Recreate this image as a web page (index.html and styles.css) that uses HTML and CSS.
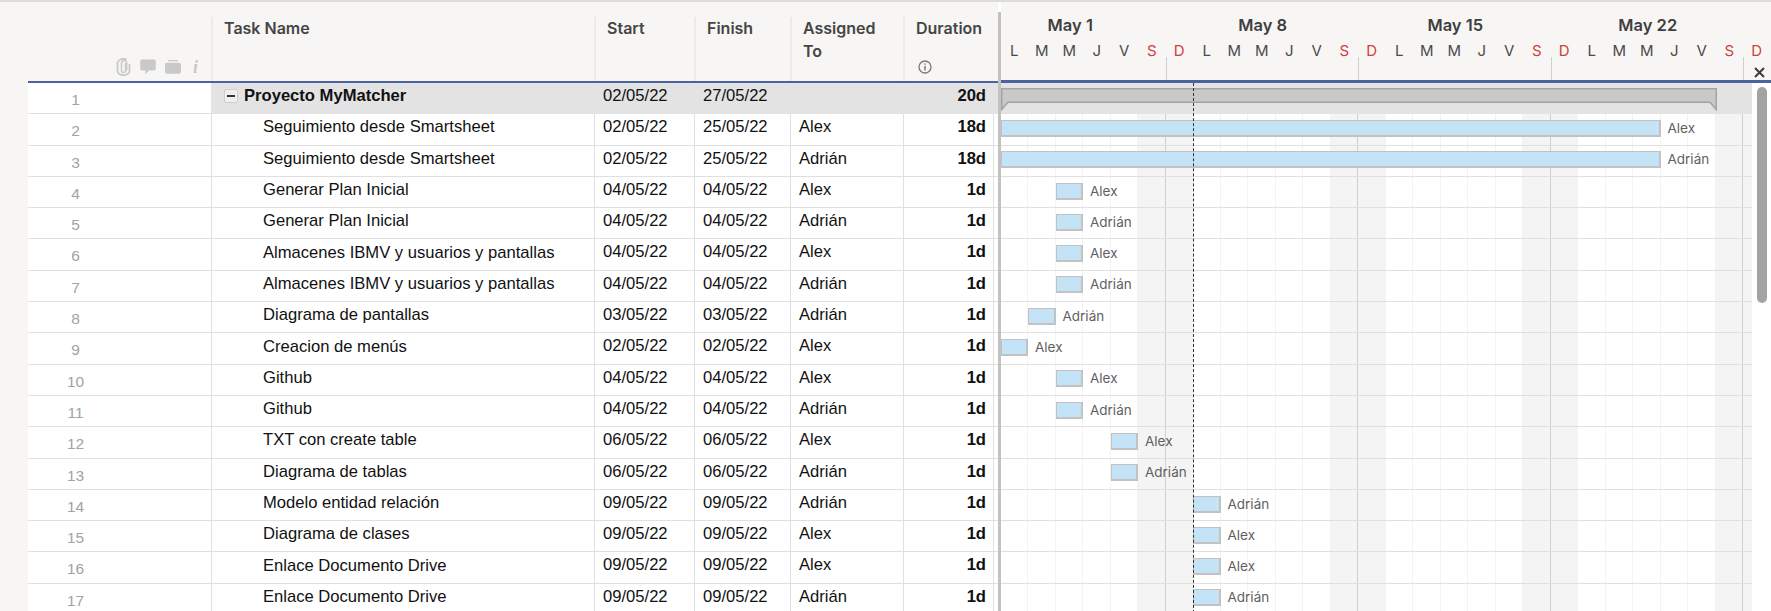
FILE: index.html
```html
<!DOCTYPE html>
<html lang="es">
<head>
<meta charset="utf-8">
<title>Proyecto MyMatcher</title>
<link rel="stylesheet" href="styles.css">
</head>
<body>
<div class="app">
  <div class="gutter"></div>
  <section class="sheet">
    <div class="head">
      <div class="hc hc-icons">
        <svg class="ico" width="15" height="18" viewBox="0 0 15 18"><path d="M9.500 5v7.500a2 2 0 0 1-4 0V5a2.600 2.600 0 0 1 5.200 0v7.500" fill="none" stroke="#c9c9c9" stroke-width="1.500"/><path d="M13.500 6v7a6 4.200 0 0 1-12 0V5.500a6 4.700 0 0 1 9-4" fill="none" stroke="#c9c9c9" stroke-width="1.800"/></svg>
        <svg class="ico" width="16" height="16" viewBox="0 0 16 16"><path d="M2 .5h12A1.800 1.800 0 0 1 15.800 2.300v7.400A1.800 1.800 0 0 1 14 11.500H9L5.500 15.500v-4H2A1.800 1.800 0 0 1 .2 9.700V2.300A1.800 1.800 0 0 1 2 .5z" fill="#c9c9c9"/></svg>
        <svg class="ico" width="16" height="14" viewBox="0 0 16 14"><path d="M3 0h10v1.300H3z" fill="#c9c9c9"/><rect x="0" y="2.700" width="16" height="11" rx="2" fill="#c9c9c9"/></svg>
        <span class="ico-i">i</span>
      </div>
      <div class="hc">Task Name</div>
      <div class="hc">Start</div>
      <div class="hc">Finish</div>
      <div class="hc hc-assigned">Assigned To</div>
      <div class="hc hc-dur">Duration
        <svg class="info" width="14" height="14" viewBox="0 0 14 14"><circle cx="7" cy="7" r="6" fill="none" stroke="#7a7a7a" stroke-width="1.300"/><path d="M7 3.500v1.200M7 6v4.500" stroke="#7a7a7a" stroke-width="1.500"/></svg>
      </div>
    </div>

    <div class="row summary"><div class="num">1</div><div class="c task"><span class="toggle"></span>Proyecto MyMatcher</div><div class="c">02/05/22</div><div class="c">27/05/22</div><div class="c"></div><div class="c dur">20d</div></div>
    <div class="row"><div class="num">2</div><div class="c task sub">Seguimiento desde Smartsheet</div><div class="c">02/05/22</div><div class="c">25/05/22</div><div class="c">Alex</div><div class="c dur">18d</div></div>
    <div class="row"><div class="num">3</div><div class="c task sub">Seguimiento desde Smartsheet</div><div class="c">02/05/22</div><div class="c">25/05/22</div><div class="c">Adrián</div><div class="c dur">18d</div></div>
    <div class="row"><div class="num">4</div><div class="c task sub">Generar Plan Inicial</div><div class="c">04/05/22</div><div class="c">04/05/22</div><div class="c">Alex</div><div class="c dur">1d</div></div>
    <div class="row"><div class="num">5</div><div class="c task sub">Generar Plan Inicial</div><div class="c">04/05/22</div><div class="c">04/05/22</div><div class="c">Adrián</div><div class="c dur">1d</div></div>
    <div class="row"><div class="num">6</div><div class="c task sub">Almacenes IBMV y usuarios y pantallas</div><div class="c">04/05/22</div><div class="c">04/05/22</div><div class="c">Alex</div><div class="c dur">1d</div></div>
    <div class="row"><div class="num">7</div><div class="c task sub">Almacenes IBMV y usuarios y pantallas</div><div class="c">04/05/22</div><div class="c">04/05/22</div><div class="c">Adrián</div><div class="c dur">1d</div></div>
    <div class="row"><div class="num">8</div><div class="c task sub">Diagrama de pantallas</div><div class="c">03/05/22</div><div class="c">03/05/22</div><div class="c">Adrián</div><div class="c dur">1d</div></div>
    <div class="row"><div class="num">9</div><div class="c task sub">Creacion de menús</div><div class="c">02/05/22</div><div class="c">02/05/22</div><div class="c">Alex</div><div class="c dur">1d</div></div>
    <div class="row"><div class="num">10</div><div class="c task sub">Github</div><div class="c">04/05/22</div><div class="c">04/05/22</div><div class="c">Alex</div><div class="c dur">1d</div></div>
    <div class="row"><div class="num">11</div><div class="c task sub">Github</div><div class="c">04/05/22</div><div class="c">04/05/22</div><div class="c">Adrián</div><div class="c dur">1d</div></div>
    <div class="row"><div class="num">12</div><div class="c task sub">TXT con create table</div><div class="c">06/05/22</div><div class="c">06/05/22</div><div class="c">Alex</div><div class="c dur">1d</div></div>
    <div class="row"><div class="num">13</div><div class="c task sub">Diagrama de tablas</div><div class="c">06/05/22</div><div class="c">06/05/22</div><div class="c">Adrián</div><div class="c dur">1d</div></div>
    <div class="row"><div class="num">14</div><div class="c task sub">Modelo entidad relación</div><div class="c">09/05/22</div><div class="c">09/05/22</div><div class="c">Adrián</div><div class="c dur">1d</div></div>
    <div class="row"><div class="num">15</div><div class="c task sub">Diagrama de clases</div><div class="c">09/05/22</div><div class="c">09/05/22</div><div class="c">Alex</div><div class="c dur">1d</div></div>
    <div class="row"><div class="num">16</div><div class="c task sub">Enlace Documento Drive</div><div class="c">09/05/22</div><div class="c">09/05/22</div><div class="c">Alex</div><div class="c dur">1d</div></div>
    <div class="row"><div class="num">17</div><div class="c task sub">Enlace Documento Drive</div><div class="c">09/05/22</div><div class="c">09/05/22</div><div class="c">Adrián</div><div class="c dur">1d</div></div>
  </section>

  <div class="splitter"></div>

  <section class="gantt">
    <div class="g-head">
      <div class="months">
        <div class="mon first"><span>May 1</span></div>
        <div class="mon"><span>May 8</span></div>
        <div class="mon"><span>May 15</span></div>
        <div class="mon"><span>May 22</span></div>
        <div class="mon last"></div>
      </div>
      <div class="days">
        <span>L</span><span>M</span><span>M</span><span>J</span><span>V</span><span class="we">S</span><span class="we">D</span>
        <span>L</span><span>M</span><span>M</span><span>J</span><span>V</span><span class="we">S</span><span class="we">D</span>
        <span>L</span><span>M</span><span>M</span><span>J</span><span>V</span><span class="we">S</span><span class="we">D</span>
        <span>L</span><span>M</span><span>M</span><span>J</span><span>V</span><span class="we">S</span><span class="we">D</span>
      </div>
      <svg class="close" width="11" height="11" viewBox="0 0 11 11"><path d="M1 1l9 9M10 1l-9 9" stroke="#3c3c3c" stroke-width="2"/></svg>
    </div>
    <div class="g-wrap">
      <div class="g-body">
        <div class="cols">
          <i></i><i></i><i></i><i></i><i></i><i class="sat"></i><i class="sun"></i>
          <i></i><i></i><i></i><i></i><i></i><i class="sat"></i><i class="sun"></i>
          <i></i><i></i><i></i><i></i><i></i><i class="sat"></i><i class="sun"></i>
          <i></i><i></i><i></i><i></i><i></i><i class="sat"></i><i class="sun"></i>
        </div>
        <div class="g-row g-summary">
          <svg class="sumbar" width="716" height="23" viewBox="0 0 716 23"><path d="M.75 .75H715.250V21.500L709 14.250H7L.75 21.500z" fill="#c9c9c9" stroke="#a3a3a3" stroke-width="1.500"/></svg>
        </div>
        <div class="g-row"><b class="bar long"></b><span class="who">Alex</span></div>
        <div class="g-row"><b class="bar long"></b><span class="who">Adrián</span></div>
        <div class="g-row d2"><b class="bar"></b><span class="who">Alex</span></div>
        <div class="g-row d2"><b class="bar"></b><span class="who">Adrián</span></div>
        <div class="g-row d2"><b class="bar"></b><span class="who">Alex</span></div>
        <div class="g-row d2"><b class="bar"></b><span class="who">Adrián</span></div>
        <div class="g-row d1"><b class="bar"></b><span class="who">Adrián</span></div>
        <div class="g-row"><b class="bar"></b><span class="who">Alex</span></div>
        <div class="g-row d2"><b class="bar"></b><span class="who">Alex</span></div>
        <div class="g-row d2"><b class="bar"></b><span class="who">Adrián</span></div>
        <div class="g-row d4"><b class="bar"></b><span class="who">Alex</span></div>
        <div class="g-row d4"><b class="bar"></b><span class="who">Adrián</span></div>
        <div class="g-row d7"><b class="bar"></b><span class="who">Adrián</span></div>
        <div class="g-row d7"><b class="bar"></b><span class="who">Alex</span></div>
        <div class="g-row d7"><b class="bar"></b><span class="who">Alex</span></div>
        <div class="g-row d7"><b class="bar"></b><span class="who">Adrián</span></div>
        <div class="today"></div>
      </div>
      <div class="scroll"><div class="thumb"></div></div>
    </div>
  </section>
</div>
</body>
</html>
```
FILE: styles.css
```css
* { box-sizing: border-box; }
html, body { margin: 0; height: 100%; overflow: hidden; background: #fff; }
.app {
  display: flex;
  height: 611px;
  width: 1771px;
  overflow: hidden;
  border-top: 2px solid #dcdcdc;
  font-family: "Liberation Sans", Arial, sans-serif;
  position: relative;
}
.gutter { width: 28px; flex: none; background: #f7f6f4; }

.sheet { width: 970px; flex: none; }
.head, .row {
  display: grid;
  grid-template-columns: 183px 383px 100px 96px 113px 90px 5px;
}
.head {
  height: 81px;
  padding-top: 15px;
  background: #f7f6f4;
  border-bottom: 2px solid #4a63a0;
  font-family: Inter, "Liberation Sans", sans-serif;
  font-weight: 600;
  font-size: 16px;
  line-height: 23px;
  color: #454545;
}
.hc {
  border-left: 2px solid #ecebe9;
  padding: 0 4px 0 11px;
  position: relative;
}
.hc-assigned { padding-right: 14px; }
.hc-icons {
  border-left: 0;
  display: flex;
  align-items: center;
  justify-content: flex-end;
  gap: 9px;
  padding: 36px 12px 0 0;
}
.ico-i {
  font: italic 700 18px/18px "Liberation Serif", serif;
  color: #c9c9c9;
  margin: 0 1px 0 3px;
}
.info { display: block; margin: 20px 0 0 2px; }

.row {
  height: 31.300px;
  font-size: 16.600px;
  color: #111;
  line-height: 26px;
  background: #fff;
}
.row > * { border-bottom: 1px solid #e0e0e0; }
.num {
  text-align: center;
  padding: 4px 88px 0 0;
  font-size: 15.500px;
  color: #a3a3a3;
  font-family: "Liberation Sans", sans-serif;
}
.c {
  border-left: 1px solid #e0e0e0;
  padding-left: 8px;
  white-space: nowrap;
  overflow: hidden;
}
.task { display: flex; align-items: center; height: 100%; padding-bottom: 4px; }
.row .sub { padding-left: 51px; }
.dur { text-align: right; padding-right: 7px; font-weight: 700; }
.summary .c { background: #e3e3e3; border-left-color: #e3e3e3; border-bottom-color: #e3e3e3; }
.summary .task { font-weight: 700; padding-left: 12px; }
.toggle {
  width: 14px;
  height: 14px;
  border: 1px solid #cfcfcf;
  border-radius: 2px;
  background: linear-gradient(#333, #333) center / 8px 2px no-repeat #eeeeee;
  margin-right: 6px;
  flex: none;
}
.row::after { content: ""; border-left: 1px solid #e0e0e0; border-bottom: 1px solid #e0e0e0; }
.summary::after { background: #e3e3e3; border-color: #e3e3e3; }

.splitter {
  width: 2.500px;
  flex: none;
  margin-top: 10px;
  background: #c2c2c2;
  position: relative;
  z-index: 2;
}

.gantt { width: 771px; flex: none; }
.g-head {
  height: 81px;
  background: #f7f6f4;
  border-bottom: 3px solid #4a63a0;
  position: relative;
}
.months {
  display: grid;
  grid-template-columns: 165px 192.500px 192.500px 192.500px 27.500px;
  height: 39px;
  margin-left: 1px;
  font: 600 16.500px/46px Inter, "Liberation Sans", sans-serif;
  color: #3f3f3f;
}
.mon { text-align: center; white-space: nowrap; }
.mon.first { padding-right: 27.500px; }
.days {
  display: grid;
  grid-template-columns: repeat(28, 27.500px);
  font: 400 15px/20px Inter, "Liberation Sans", sans-serif;
  color: #4a4a4a;
  text-align: center;
  height: 39px;
  background:
    linear-gradient(#cfcfcf, #cfcfcf) 165px 16px / 1px 23px no-repeat,
    linear-gradient(#cfcfcf, #cfcfcf) 357.500px 16px / 1px 23px no-repeat,
    linear-gradient(#cfcfcf, #cfcfcf) 550px 16px / 1px 23px no-repeat,
    linear-gradient(#cfcfcf, #cfcfcf) 742.500px 16px / 1px 23px no-repeat;
}
.we { color: #cf3f3f; }
.close { position: absolute; right: 7px; top: 65px; }

.g-wrap { display: flex; }
.g-body { width: 751px; flex: none; height: 530px; overflow: hidden; position: relative; }
.cols {
  position: absolute;
  inset: 0 auto 0 0;
  display: flex;
  width: 770px;
}
.cols i { flex: none; width: 27.500px; border-right: 1px solid #f3f3f3; }
.cols .sat { background: #f4f4f4; border-right: 1px solid #cfcfcf; }
.cols .sun { background: #f4f4f4; }
.g-row {
  height: 31.300px;
  display: flex;
  align-items: center;
  border-bottom: 1px solid #e0e0e0;
  position: relative;
}
.g-summary { background: #e3e3e3; border-bottom-color: #e3e3e3; align-items: flex-start; padding-top: 5px; }
.sumbar { display: block; }
.bar {
  display: block;
  width: 27.500px;
  height: 17px;
  margin-bottom: 2px;
  background: #c5e3f6;
  border: 2px solid #c2c2c2;
  border-width: 1px 2px 2px 1px;
  flex: none;
}
.bar.long { width: 660px; }
.d1 { padding-left: 27.500px; }
.d2 { padding-left: 55px; }
.d4 { padding-left: 110px; }
.d7 { padding-left: 192.500px; }
.who {
  font: 400 13.500px/16px Inter, "Liberation Sans", sans-serif;
  color: #5f5f5f;
  margin: 0 0 3px 7px;
}
.today {
  position: absolute;
  left: 192px;
  top: 0;
  bottom: 0;
  border-left: 1px dashed #333;
}
.scroll { width: 20px; flex: none; height: 530px; padding: 4px 5px 0 5px; background: #fff; }
.thumb { height: 216px; border-radius: 5px; background: #a3a3a3; }
```
